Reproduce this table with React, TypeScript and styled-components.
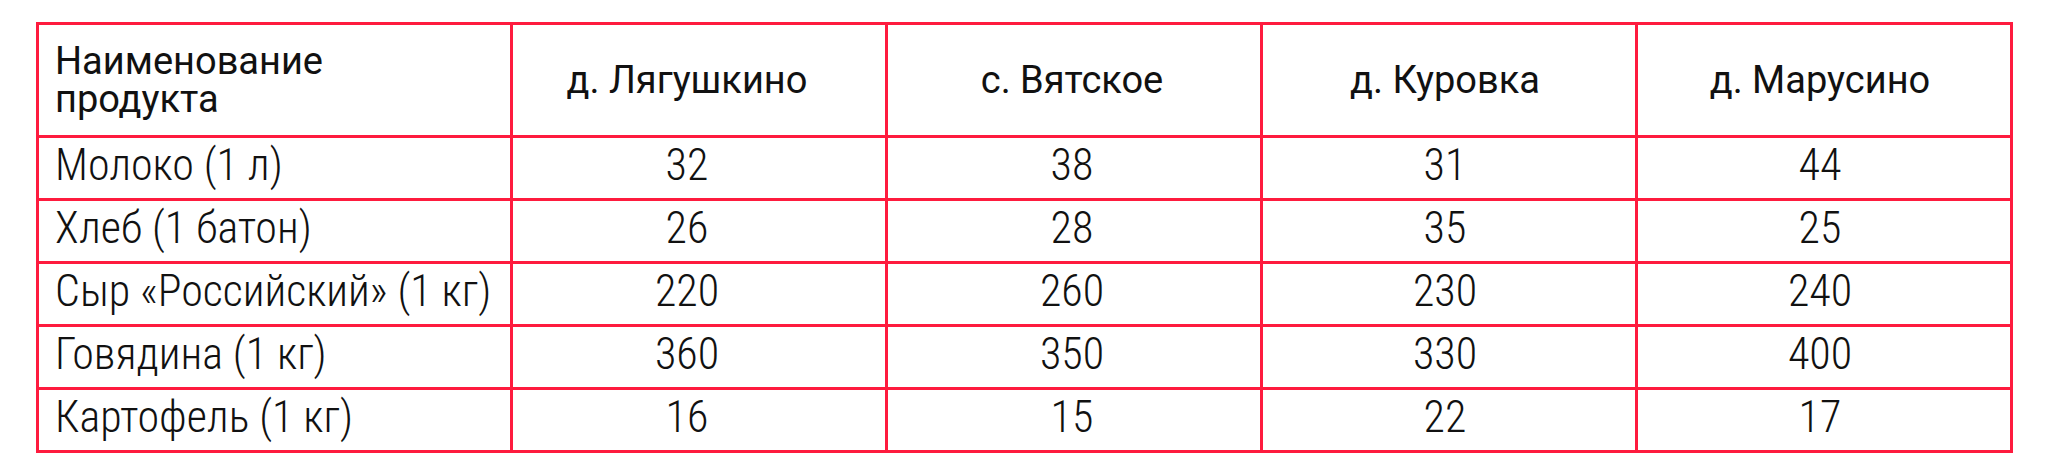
import { Fragment } from 'react';
import styled, { createGlobalStyle } from 'styled-components';

const GlobalStyle = createGlobalStyle`
  html, body {
    margin: 0;
    padding: 0;
    background: #ffffff;
  }
`;

const Page = styled.div`
  padding: 22px 0 0 36px;
  font-family: Roboto, 'Noto Sans', sans-serif;
  color: #111111;
`;

const Grid = styled.div`
  display: grid;
  grid-template-columns: 471px repeat(4, 372px);
  grid-template-rows: 110px repeat(5, 60px);
  gap: 3px;
  padding: 3px;
  width: max-content;
  background: #fe1b3e;
`;

const NameCell = styled.div`
  display: flex;
  align-items: center;
  padding: 0 4px 0 16px;
  background: #ffffff;
  overflow: hidden;
`;

// $shift nudges centred content left (the first village column sits a bit off-centre)
const ValueCell = styled.div<{ $shift?: number }>`
  display: flex;
  align-items: center;
  justify-content: center;
  padding: 0 ${(p) => 4 + (p.$shift ?? 0) * 2}px 0 4px;
  background: #ffffff;
  overflow: hidden;
`;

const HeadText = styled.span`
  font-size: 38px;
  font-weight: 400;
  line-height: 38px;
`;

// body rows use a narrow, light face
const BodyText = styled.span`
  display: inline-block;
  font-size: 44px;
  font-weight: 300;
  font-stretch: 80%;
  line-height: 1;
  white-space: nowrap;
  margin-top: -6px;
`;

const villages = ['д. Лягушкино', 'с. Вятское', 'д. Куровка', 'д. Марусино'];
const shifts = [12, 2, 4, 4];

const rows: { name: string; prices: number[] }[] = [
  { name: 'Молоко (1 л)', prices: [32, 38, 31, 44] },
  { name: 'Хлеб (1 батон)', prices: [26, 28, 35, 25] },
  { name: 'Сыр «Российский» (1 кг)', prices: [220, 260, 230, 240] },
  { name: 'Говядина (1 кг)', prices: [360, 350, 330, 400] },
  { name: 'Картофель (1 кг)', prices: [16, 15, 22, 17] },
];

const App = () => {
  return (
    <Page>
      <GlobalStyle />
      <Grid>
        <NameCell>
          <HeadText>
            Наименование
            <br />
            продукта
          </HeadText>
        </NameCell>
        {villages.map((v, i) => (
          <ValueCell key={v} $shift={shifts[i]}>
            <HeadText>{v}</HeadText>
          </ValueCell>
        ))}
        {rows.map((row) => (
          <Fragment key={row.name}>
            <NameCell>
              <BodyText>{row.name}</BodyText>
            </NameCell>
            {row.prices.map((price, i) => (
              <ValueCell key={i} $shift={shifts[i]}>
                <BodyText>{price}</BodyText>
              </ValueCell>
            ))}
          </Fragment>
        ))}
      </Grid>
    </Page>
  );
};

export default App;
